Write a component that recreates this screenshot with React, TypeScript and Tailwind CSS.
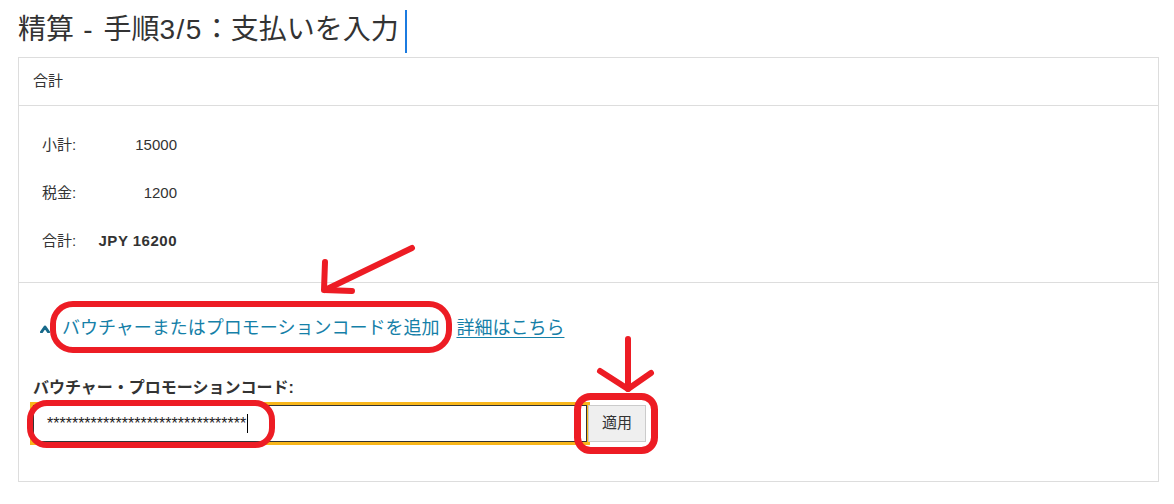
import React from "react";

export default function App() {
  const font = { fontFamily: '"Liberation Sans", "Noto Sans CJK JP", sans-serif' };
  return (
    <div className="relative w-[1174px] h-[504px] bg-white text-[#333] overflow-hidden" style={font}>
      <div className="pl-[18px] pt-[10px]">
        <h1 className="flex items-start h-[43px] text-[28px] leading-[40px] font-normal text-[#333] whitespace-pre">
          <span>精算</span>
          <span className="tracking-[1.5px]"> - </span>
          <span>手順</span>
          <span className="tracking-[1.5px]">3/5</span>
          <span>：支払いを入力</span>
          <span className="ml-[6px] w-[2px] h-[43px] bg-[#1b7be0]" />
        </h1>
        <div className="mt-[4px] w-[1141px] border border-[#dddddd]">
          <div className="h-[48px] border-b border-[#dddddd] px-[14px] flex items-center text-[15px]">合計</div>
          <div className="pt-[15px] pb-[17px] pl-[23px] border-b border-[#dddddd] text-[15px]">
            <div className="grid grid-cols-[56px_79px] h-[48px] items-center">
              <span>小計:</span>
              <span className="text-right">15000</span>
            </div>
            <div className="grid grid-cols-[56px_79px] h-[48px] items-center">
              <span>税金:</span>
              <span className="text-right">1200</span>
            </div>
            <div className="grid grid-cols-[56px_79px] h-[48px] items-center">
              <span>合計:</span>
              <span className="text-right font-bold tracking-[0.5px]">JPY 16200</span>
            </div>
          </div>
          <div className="pt-[32px] px-[14px] pb-[39px]">
            <div className="flex items-center h-[26px] text-[18px]">
              <svg width="10" height="9" viewBox="0 0 10 9" className="ml-[7px]">
                <polyline points="1.5,8 5,3 8.5,8" fill="none" stroke="#17698a" strokeWidth="3" strokeLinecap="round" strokeLinejoin="round" />
              </svg>
              <span className="ml-[12px] text-[#1580a8]">バウチャーまたはプロモーションコードを追加</span>
              <span className="ml-[17px] text-[#1580a8] underline underline-offset-[3px]">詳細はこちら</span>
            </div>
            <div className="mt-[37px] h-[20px] leading-[20px] text-[16px] font-bold text-[#333]">バウチャー・プロモーションコード:</div>
            <div className="mt-[7px] flex items-center">
              <div className="w-[554px] h-[37px] border border-[#333] outline-3 outline-[#f8b61b] flex items-center pl-[13px] text-[16px] text-[#222]">
                <span>********************************</span>
                <span className="ml-[1px] w-[1px] h-[19px] bg-black" />
              </div>
              <div className="ml-[1px] w-[58px] h-[37px] bg-[#efefef] border border-[#cbcbcb] flex items-center justify-center text-[15px] text-[#333]">適用</div>
            </div>
          </div>
        </div>
      </div>
      <svg className="absolute inset-0 pointer-events-none" width="1174" height="504" viewBox="0 0 1174 504">
        <g fill="none" stroke="#ed1c24" strokeWidth="6" strokeLinecap="round" strokeLinejoin="round">
          <rect x="53" y="304" width="396" height="46" rx="20" />
          <rect x="30" y="403" width="242" height="42" rx="17" />
          <rect x="577.5" y="396.5" width="77" height="54" rx="13" strokeWidth="7" />
          <line x1="412" y1="248" x2="325" y2="290" />
          <polyline points="325,262 324,290 352,291" />
          <line x1="628" y1="339" x2="628" y2="389" />
          <polyline points="600,371 628,389 651,373" />
        </g>
      </svg>
    </div>
  );
}
